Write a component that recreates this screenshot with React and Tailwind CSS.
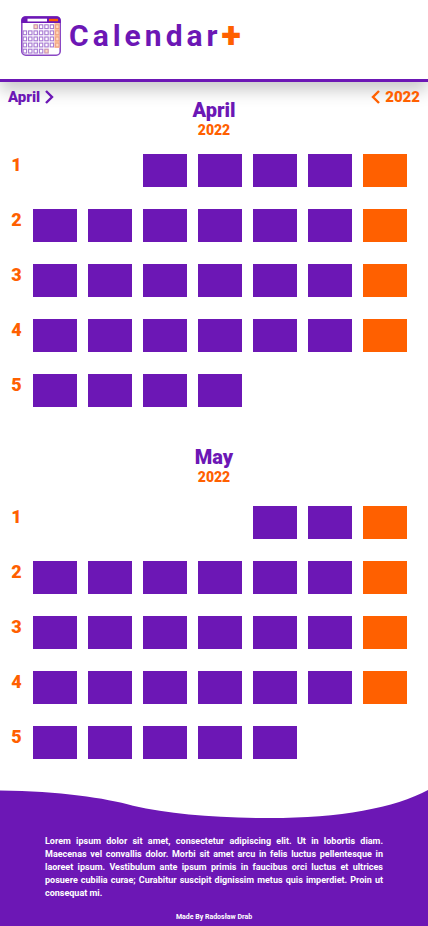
import React from "react";
import clsx from "clsx";

const months = [
  { name: "April", year: 2022, weeks: [[3, 5], [1, 7], [1, 7], [1, 7], [1, 4]] },
  { name: "May", year: 2022, weeks: [[5, 3], [1, 7], [1, 7], [1, 7], [1, 5]] },
];

function Logo() {
  const cells = [];
  for (let row = 0; row < 5; row++) {
    for (let col = 0; col < 7; col++) {
      if (row === 0 && col < 2) continue;
      if (row === 4 && col > 4) continue;
      const accent = col === 6 || (row === 0 && col === 2) || (row === 4 && col === 4);
      cells.push(
        <rect
          key={`${row}-${col}`}
          x={2.2 + col * 5.4}
          y={8.8 + row * 6.1}
          width="3.4"
          height="3.8"
          fill={accent ? "#ffd9bd" : "#fff"}
          stroke={col === 6 ? "#f0a284" : accent ? "#c98fb0" : "#a678d2"}
          strokeWidth="1.1"
        />
      );
    }
  }
  return (
    <svg viewBox="0 0 40 40" className="size-10 shrink-0" aria-hidden="true">
      <rect x="0.8" y="0.8" width="38.4" height="38.4" rx="4" fill="#fff" stroke="#8a48c4" strokeWidth="1.6" />
      <path d="M0.3 7V4.5a4 4 0 0 1 4-4h31.4a4 4 0 0 1 4 4V7z" fill="#6c17b5" />
      <rect x="6.5" y="2.7" width="19.5" height="2.8" fill="#fff" />
      <rect x="28" y="2.8" width="9" height="2.4" fill="#ff6000" />
      <rect x="33.4" y="7" width="5" height="25" fill="#ffc69c" />
      {cells}
    </svg>
  );
}

function Month({ name, year, weeks, compact }) {
  let day = 0;
  return (
    <section>
      <div className={clsx("text-center font-black", compact ? "mb-4" : "mb-[21px]")}>
        <h2 className="text-[20px] leading-[23px] text-[#6c17b5]">{name}</h2>
        <p className="text-[14px] leading-[16px] text-[#ff6000]">{year}</p>
      </div>
      <div className="flex flex-col gap-[22px] pr-[21px]">
        {weeks.map(([start, count], w) => (
          <div key={w} className="flex h-[33px]">
            <span className="w-[33px] shrink-0 text-center text-[18px] leading-[22px] font-black text-[#ff6000]">
              {w + 1}
            </span>
            <div className="grid grow grid-cols-7 gap-x-[11px]">
              {Array.from({ length: 7 }, (_, i) => {
                if (i + 1 < start || i + 1 >= start + count) return <span key={i} />;
                day += 1;
                return (
                  <button
                    key={i}
                    type="button"
                    aria-label={`${name} ${day}, ${year}`}
                    className={i === 6 ? "bg-[#ff6000]" : "bg-[#6c17b5]"}
                  />
                );
              })}
            </div>
          </div>
        ))}
      </div>
    </section>
  );
}

export default function App() {
  return (
    <div className="flex min-h-screen flex-col bg-white font-['Roboto',sans-serif]">
      <header className="flex h-[82px] items-start border-b-3 border-[#6c17b5] px-[21px] pt-4 shadow-[0_8px_16px_rgba(0,0,0,0.22)]">
        <Logo />
        <h1 className="flex items-center pl-2 text-[30px] leading-[40px] font-bold tracking-[4px] text-[#6c17b5]">
          Calendar
          <span className="text-[36px] font-black text-[#ff6000]">+</span>
        </h1>
      </header>
      <nav className="-mb-1.5 flex items-center justify-between px-2 pt-[7px] text-[15px] leading-[16px] font-black">
        <button type="button" className="flex items-center gap-1 text-[#6c17b5]">
          April
          <svg viewBox="0 0 10 14" className="h-[14px] w-[10px]" fill="none" stroke="currentColor" strokeWidth="2.4" aria-hidden="true">
            <path d="M2 1l6 6-6 6" />
          </svg>
        </button>
        <button type="button" className="flex items-center gap-1 text-[#ff6000]">
          <svg viewBox="0 0 10 14" className="h-[14px] w-[10px]" fill="none" stroke="currentColor" strokeWidth="2.4" aria-hidden="true">
            <path d="M8 1L2 7l6 6" />
          </svg>
          2022
        </button>
      </nav>
      <main className="flex flex-col gap-[39px]">
        {months.map((m, i) => (
          <Month key={m.name} {...m} compact={i === 0} />
        ))}
      </main>
      <footer className="mt-[31px] flex grow flex-col text-white">
        <svg viewBox="0 0 428 30" preserveAspectRatio="none" className="h-[30px] w-full shrink-0" aria-hidden="true">
          <path d="M0 0.5C60 1 105 8 133 15.7C170 24 215 28 270 28C340 28 395 18 428 0V30H0Z" fill="#6c17b5" />
        </svg>
        <div className="flex grow flex-col bg-[#6c17b5]">
          <p className="px-[45px] pt-[15px] text-justify text-[9px] leading-[13px] font-bold">
            Lorem ipsum dolor sit amet, consectetur adipiscing elit. Ut in lobortis diam. Maecenas vel convallis dolor.
            Morbi sit amet arcu in felis luctus pellentesque in laoreet ipsum. Vestibulum ante ipsum primis in faucibus
            orci luctus et ultrices posuere cubilia curae; Curabitur suscipit dignissim metus quis imperdiet. Proin ut
            consequat mi.
          </p>
          <p className="mt-auto pt-2 pb-1 text-center text-[7px] leading-[10px] font-bold">Made By Radosław Drab</p>
        </div>
      </footer>
    </div>
  );
}
